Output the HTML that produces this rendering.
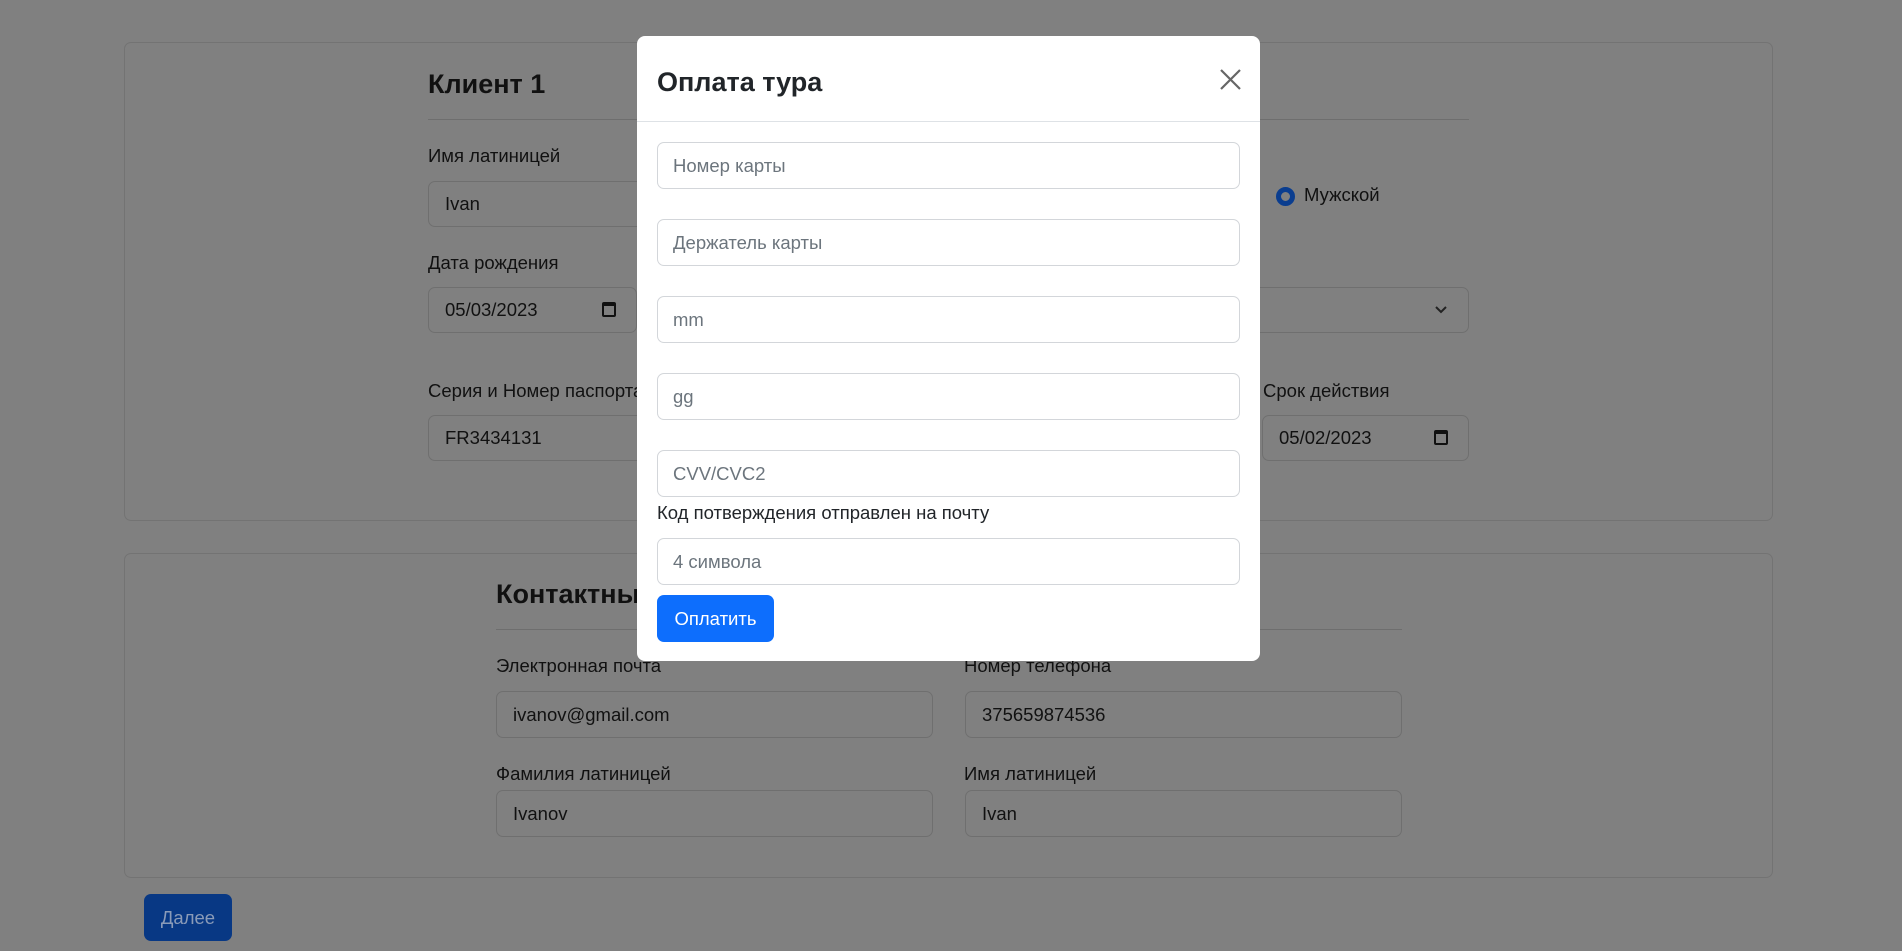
<!DOCTYPE html>
<html><head><meta charset="utf-8">
<style>
*{box-sizing:border-box;margin:0;padding:0}
body{width:1902px;height:951px;background:#808080;font-family:"Liberation Sans",sans-serif;position:relative;overflow:hidden;color:#111}
.abs{position:absolute}
.card{position:absolute;border:1px solid #737373;border-radius:7px;background:#808080}
.lbl{position:absolute;font-size:18.5px;color:#111;line-height:22px}
.bin{position:absolute;border:1px solid #6f6f6f;border-radius:7px;font-size:18.5px;padding-left:16px;display:flex;align-items:center;color:#111}
.hr{position:absolute;height:1px;background:#6e6e6e}
.modal{position:absolute;left:637px;top:36px;width:623px;height:625px;background:#fff;border-radius:8px}
.min{position:absolute;left:20px;width:583px;height:47px;border:1px solid #d3d6da;border-radius:7px;font-size:18.5px;color:#6c757d;padding-left:15px;display:flex;align-items:center}
</style></head><body>
<div class="card" style="left:124px;top:42px;width:1649px;height:479px"></div>
<div class="abs" style="left:428px;top:69px;font-size:27px;font-weight:bold;color:#111">Клиент 1</div>
<div class="hr" style="left:428px;top:119px;width:1041px"></div>
<div class="lbl" style="left:428px;top:145px">Имя латиницей</div>
<div class="bin" style="left:428px;top:181px;width:220px;height:46px">Ivan</div>
<div class="abs" style="left:1276px;top:187px;width:19px;height:19px;border-radius:50%;border:5px solid #0a3d8f;background:#808080"></div>
<div class="lbl" style="left:1304px;top:184px">Мужской</div>
<div class="lbl" style="left:428px;top:252px">Дата рождения</div>
<div class="bin" style="left:428px;top:287px;width:209px;height:46px">05/03/2023<span class="abs" style="right:20px;top:14px;width:14px;height:15px;border:2px solid #111;border-top-width:4px;border-radius:2px"></span></div>
<div class="bin" style="left:1200px;top:287px;width:269px;height:46px"><svg class="abs" style="right:20px;top:17px" width="14" height="10" viewBox="0 0 14 10"><path d="M2 2l5 5 5-5" fill="none" stroke="#222" stroke-width="2"/></svg></div>
<div class="lbl" style="left:428px;top:380px">Серия и Номер паспорта</div>
<div class="bin" style="left:428px;top:415px;width:220px;height:46px">FR3434131</div>
<div class="lbl" style="left:1263px;top:380px">Срок действия</div>
<div class="bin" style="left:1262px;top:415px;width:207px;height:46px">05/02/2023<span class="abs" style="right:20px;top:14px;width:14px;height:15px;border:2px solid #111;border-top-width:4px;border-radius:2px"></span></div>

<div class="card" style="left:124px;top:553px;width:1649px;height:325px"></div>
<div class="abs" style="left:496px;top:579px;font-size:27px;font-weight:bold;color:#111">Контактные данные</div>
<div class="hr" style="left:496px;top:629px;width:906px"></div>
<div class="lbl" style="left:496px;top:655px">Электронная почта</div>
<div class="lbl" style="left:964px;top:655px">Номер телефона</div>
<div class="bin" style="left:496px;top:691px;width:437px;height:47px">ivanov@gmail.com</div>
<div class="bin" style="left:965px;top:691px;width:437px;height:47px">375659874536</div>
<div class="lbl" style="left:496px;top:763px">Фамилия латиницей</div>
<div class="lbl" style="left:964px;top:763px">Имя латиницей</div>
<div class="bin" style="left:496px;top:790px;width:437px;height:47px">Ivanov</div>
<div class="bin" style="left:965px;top:790px;width:437px;height:47px">Ivan</div>
<div class="abs" style="left:144px;top:894px;width:88px;height:47px;background:#083884;border-radius:7px;color:#8a9bb8;font-size:18.5px;display:flex;align-items:center;justify-content:center">Далее</div>

<div class="modal">
<div class="abs" style="left:20px;top:31px;font-size:27px;font-weight:bold;color:#212529">Оплата тура</div>
<svg class="abs" style="left:583px;top:33px" width="21" height="21" viewBox="0 0 21 21"><path d="M1 1L20 20M20 1L1 20" stroke="#666" stroke-width="2.2"/></svg>
<div class="abs" style="left:0;top:85px;width:623px;height:1px;background:#dee2e6"></div>
<div class="min" style="top:106px">Номер карты</div>
<div class="min" style="top:183px">Держатель карты</div>
<div class="min" style="top:260px">mm</div>
<div class="min" style="top:337px">gg</div>
<div class="min" style="top:414px">CVV/CVC2</div>
<div class="abs" style="left:20px;top:466px;font-size:18.5px;color:#212529">Код потверждения отправлен на почту</div>
<div class="min" style="top:502px">4 символа</div>
<div class="abs" style="left:20px;top:559px;width:117px;height:47px;background:#0d6efd;border-radius:7px;color:#fff;font-size:18.5px;display:flex;align-items:center;justify-content:center">Оплатить</div>
</div>
</body></html>
